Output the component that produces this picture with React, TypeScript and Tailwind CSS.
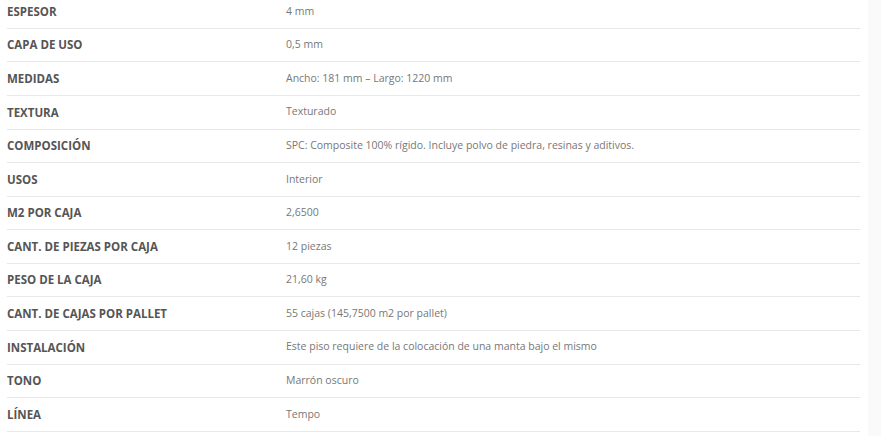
import React from "react";

const rows: [string, string][] = [
  ["ESPESOR", "4 mm"],
  ["CAPA DE USO", "0,5 mm"],
  ["MEDIDAS", "Ancho: 181 mm – Largo: 1220 mm"],
  ["TEXTURA", "Texturado"],
  ["COMPOSICIÓN", "SPC: Composite 100% rígido. Incluye polvo de piedra, resinas y aditivos."],
  ["USOS", "Interior"],
  ["M2 POR CAJA", "2,6500"],
  ["CANT. DE PIEZAS POR CAJA", "12 piezas"],
  ["PESO DE LA CAJA", "21,60 kg"],
  ["CANT. DE CAJAS POR PALLET", "55 cajas (145,7500 m2 por pallet)"],
  ["INSTALACIÓN", "Este piso requiere de la colocación de una manta bajo el mismo"],
  ["TONO", "Marrón oscuro"],
  ["LÍNEA", "Tempo"],
];

export default function App() {
  return (
    <div className="flex h-[436px] w-[881px] overflow-hidden bg-white" style={{ fontFamily: "'Open Sans', 'Liberation Sans', sans-serif" }}>
      <div className="ml-[7px] mt-[-4.8px] w-[853px]">
        {rows.map(([k, v]) => (
          <div key={k} className="flex h-[33.58px] items-center border-b border-[#e8e8e8]">
            <div className="w-[279px] text-[11.5px] font-bold text-[#555555]">{k}</div>
            <div className="text-[10.5px] text-[#777777]">{v}</div>
          </div>
        ))}
      </div>
      <div className="ml-auto w-[13px] bg-[#fafafa]" />
    </div>
  );
}
